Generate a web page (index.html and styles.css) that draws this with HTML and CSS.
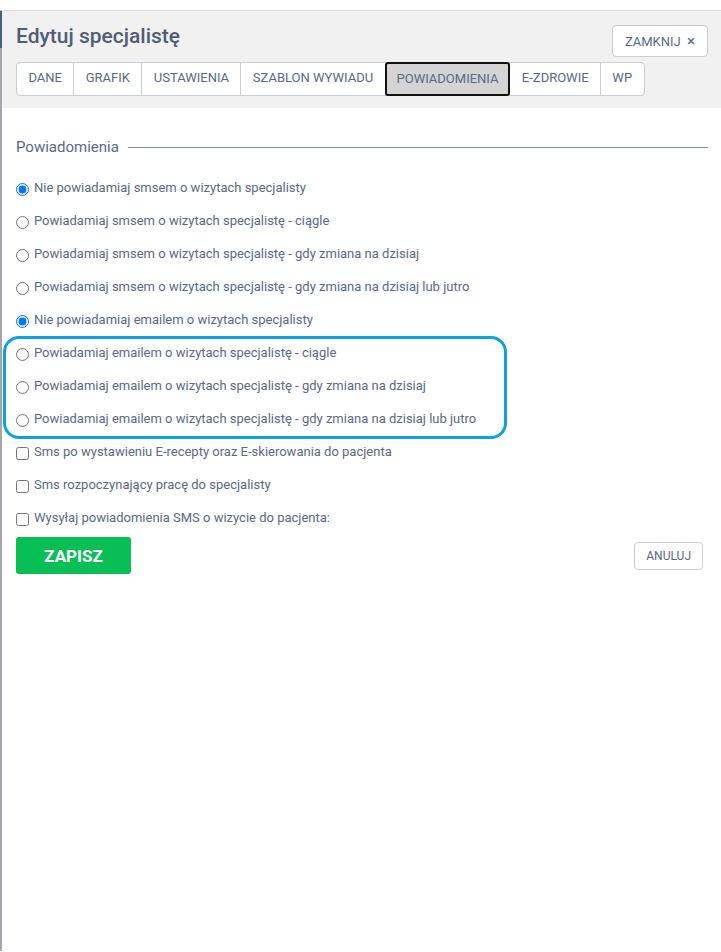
FILE: index.html
```html
<!DOCTYPE html>
<html lang="pl">
<head>
<meta charset="utf-8">
<link rel="stylesheet" href="styles.css">
</head>
<body>
<div class="spacer"></div>
<div class="page">
  <div class="header">
    <div class="header-main">
      <h1 class="title">Edytuj specjalistę</h1>
      <div class="tabs">
        <span class="tab">DANE</span>
        <span class="tab">GRAFIK</span>
        <span class="tab">USTAWIENIA</span>
        <span class="tab">SZABLON WYWIADU</span>
        <span class="tab active">POWIADOMIENIA</span>
        <span class="tab">E-ZDROWIE</span>
        <span class="tab">WP</span>
      </div>
    </div>
    <button class="close-btn">ZAMKNIJ <span class="x">×</span></button>
  </div>
  <div class="content">
    <div class="legend"><span>Powiadomienia</span><span class="rule"></span></div>
    <div class="options">
      <label class="opt"><input type="radio" name="sms" checked><span>Nie powiadamiaj smsem o wizytach specjalisty</span></label>
      <label class="opt"><input type="radio" name="sms"><span>Powiadamiaj smsem o wizytach specjalistę - ciągle</span></label>
      <label class="opt"><input type="radio" name="sms"><span>Powiadamiaj smsem o wizytach specjalistę - gdy zmiana na dzisiaj</span></label>
      <label class="opt"><input type="radio" name="sms"><span>Powiadamiaj smsem o wizytach specjalistę - gdy zmiana na dzisiaj lub jutro</span></label>
      <label class="opt"><input type="radio" name="mail" checked><span>Nie powiadamiaj emailem o wizytach specjalisty</span></label>
      <div class="highlight-group">
        <div class="highlight"></div>
        <label class="opt"><input type="radio" name="mail"><span>Powiadamiaj emailem o wizytach specjalistę - ciągle</span></label>
        <label class="opt"><input type="radio" name="mail"><span>Powiadamiaj emailem o wizytach specjalistę - gdy zmiana na dzisiaj</span></label>
        <label class="opt"><input type="radio" name="mail"><span>Powiadamiaj emailem o wizytach specjalistę - gdy zmiana na dzisiaj lub jutro</span></label>
      </div>
      <label class="opt"><input type="checkbox"><span>Sms po wystawieniu E-recepty oraz E-skierowania do pacjenta</span></label>
      <label class="opt"><input type="checkbox"><span>Sms rozpoczynający pracę do specjalisty</span></label>
      <label class="opt"><input type="checkbox"><span>Wysyłaj powiadomienia SMS o wizycie do pacjenta:</span></label>
    </div>
    <div class="actions">
      <button class="save">ZAPISZ</button>
      <button class="cancel">ANULUJ</button>
    </div>
  </div>
</div>
</body>
</html>
```

FILE: styles.css
```css
html, body {
  margin: 0;
  padding: 0;
  background: #ffffff;
}
body {
  font-family: Roboto, "Liberation Sans", sans-serif;
  color: #56657f;
}
.spacer {
  height: 10px;
}
.page {
  position: relative;
  border-top: 1px solid #dedede;
  border-left: 2px solid #a9a3ab;
  min-height: 941px;
  box-sizing: border-box;
}
.page::before {
  content: "";
  position: absolute;
  left: -2px;
  top: 0;
  width: 2px;
  height: 37px;
  background: #4b5d78;
}
.header {
  background: #f1f1f1;
  height: 97px;
  display: flex;
  justify-content: space-between;
  align-items: flex-start;
  padding: 0 13px 0 14px;
  box-sizing: border-box;
}
.header-main {
  flex: 1;
  min-width: 0;
}
.title {
  margin: 0;
  padding-top: 12px;
  font-size: 21px;
  font-weight: 500;
  line-height: 26px;
  color: #4f5d75;
}
.tabs {
  display: flex;
  margin-top: 13px;
  background: #fff;
  border: 1px solid #c9cdd6;
  border-radius: 4px;
  width: max-content;
}
.tab {
  font-size: 13px;
  line-height: 30px;
  padding: 0 11.4px;
  color: #5a6985;
  border-left: 1px solid #c9cdd6;
  white-space: nowrap;
}
.tab:first-child {
  border-left: none;
}
.tab.active {
  background: #d4d4d4;
  border: 2px solid #111;
  border-radius: 3px;
  margin: -1px 0;
  padding: 0 10px;
  line-height: 30px;
}
.tab.active + .tab {
  border-left: none;
}
.close-btn {
  flex-shrink: 0;
  white-space: nowrap;
  margin-top: 14px;
  height: 32px;
  padding: 0 12px;
  background: #fff;
  border: 1px solid #c9cdd6;
  border-radius: 4px;
  font-family: inherit;
  font-size: 13px;
  color: #5a6985;
}
.close-btn .x {
  margin-left: 3px;
  font-size: 15px;
}
.content {
  padding: 29px 13px 0 14px;
}
.legend {
  display: flex;
  align-items: center;
  gap: 9px;
  font-size: 15px;
  line-height: 20px;
  color: #5a6985;
}
.legend .rule {
  flex: 1;
  height: 1px;
  background: #8794a8;
}
.options {
  margin-top: 14px;
  display: flex;
  flex-direction: column;
}
.highlight-group {
  position: relative;
  display: flex;
  flex-direction: column;
}
.highlight {
  position: absolute;
  left: -13px;
  top: 0;
  width: 504px;
  height: 103px;
  border: 3px solid #0aa2e2;
  border-radius: 16px;
  box-sizing: border-box;
  pointer-events: none;
}
.opt {
  display: flex;
  align-items: center;
  height: 33px;
  font-size: 13px;
  color: #5a6985;
}
.opt input {
  margin: 3px 5px 0 0;
  width: 13px;
  height: 13px;
}
.actions {
  display: flex;
  justify-content: space-between;
  align-items: center;
  margin-top: 3px;
  padding-right: 5px;
}
.save {
  width: 115px;
  height: 37px;
  background: #08bf55;
  color: #fff;
  border: none;
  border-radius: 3px;
  font-family: inherit;
  font-weight: 700;
  font-size: 17px;
}
.cancel {
  height: 28px;
  padding: 0 11px;
  background: #fff;
  border: 1px solid #c9cdd6;
  border-radius: 4px;
  font-family: inherit;
  font-size: 12px;
  color: #5a6985;
}
```
